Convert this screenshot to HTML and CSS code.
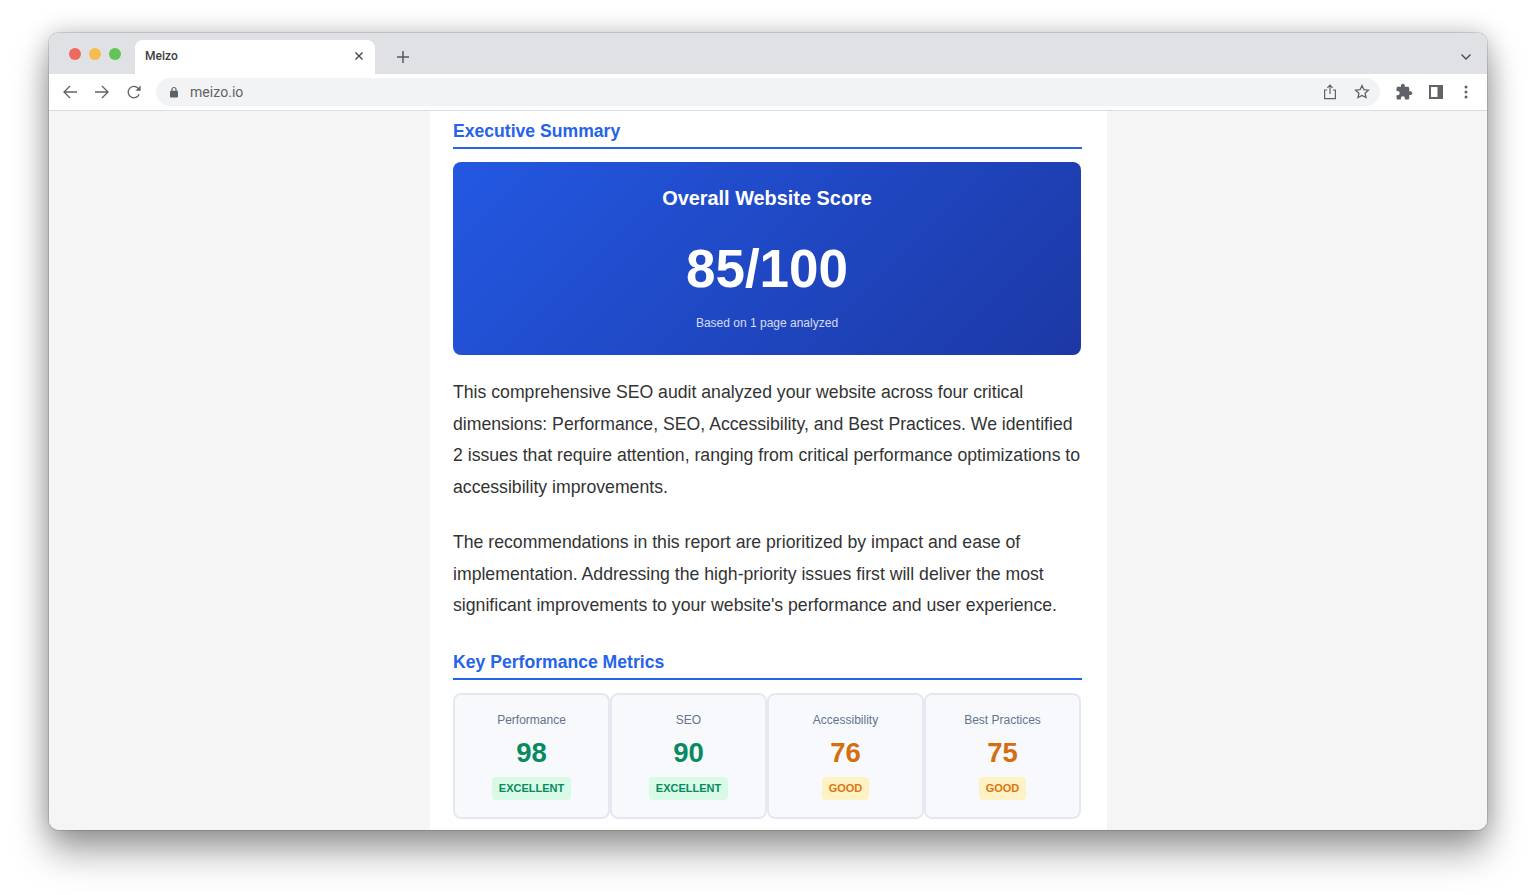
FILE: index.html
```html
<!DOCTYPE html>
<html lang="en">

<head>
    <meta charset="UTF-8">
    <meta name="viewport" content="width=device-width, initial-scale=1.0">
    <title>Meizo</title>
    <link rel="stylesheet" href="styles.css">
</head>

<body>

    <div class="browser-window">

        <!-- Tab strip -->
        <div class="tab-strip">
            <div class="traffic-lights">
                <span class="light light-red"></span>
                <span class="light light-yellow"></span>
                <span class="light light-green"></span>
            </div>
            <div class="tab">
                <span class="tab-title">Meizo</span>
                <svg class="tab-close" width="10" height="10" viewBox="0 0 10 10">
                    <path d="M1.500 1.500l7 7M8.500 1.500l-7 7" stroke="#45474a" stroke-width="1.4" fill="none"/>
                </svg>
            </div>
            <svg class="new-tab" width="14" height="14" viewBox="0 0 14 14">
                <path d="M7 1v12M1 7h12" stroke="#54575b" stroke-width="1.500" fill="none"/>
            </svg>
            <svg class="tab-list" width="12" height="8" viewBox="0 0 12 8">
                <path d="M1.500 1.500L6 6l4.500-4.500" stroke="#45474a" stroke-width="1.300" fill="none"/>
            </svg>
        </div>

        <!-- Address bar -->
        <div class="toolbar">
            <div class="nav-buttons">
                <svg width="16" height="16" viewBox="0 0 16 16">
                    <path d="M15 8H2M8 2L2 8l6 6" stroke="#5f6368" stroke-width="1.300" fill="none"/>
                </svg>
                <svg width="16" height="16" viewBox="0 0 16 16">
                    <path d="M1 8h13M8 2l6 6-6 6" stroke="#5f6368" stroke-width="1.300" fill="none"/>
                </svg>
                <svg width="16" height="16" viewBox="0 0 16 16">
                    <path d="M13.200 10.200A5.700 5.700 0 1 1 12 4.100L14 6" stroke="#5f6368" stroke-width="1.300" fill="none"/>
                    <path d="M14.600 1.600v5.200H9.400z" fill="#5f6368"/>
                </svg>
            </div>
            <div class="omnibox">
                <svg class="lock" width="10" height="12" viewBox="0 0 10 12">
                    <path d="M3 5V3.500a2 2 0 0 1 4 0V5" stroke="#5f6368" stroke-width="1.200" fill="none"/>
                    <rect x="1" y="4.800" width="8" height="6.700" rx="1" fill="#5f6368"/>
                </svg>
                <span class="url">meizo.io</span>
                <div class="omnibox-actions">
                    <svg width="14" height="16" viewBox="0 0 14 16">
                        <path d="M4.200 6H1.600v8.600h10.800V6H9.800M7 10V1.400M4.400 3.800L7 1.200l2.600 2.600" stroke="#5f6368" stroke-width="1.200" fill="none"/>
                    </svg>
                    <svg width="16" height="15" viewBox="0 0 16 15">
                        <path d="M8 1.600l1.900 4.100 4.500.5-3.300 3 .9 4.400L8 11.400l-4 2.200.9-4.400-3.300-3 4.500-.5z" stroke="#5f6368" stroke-width="1.300" fill="none"/>
                    </svg>
                </div>
            </div>
            <div class="toolbar-actions">
                <svg width="18" height="18" viewBox="0 0 24 24">
                    <path d="M20.500 11H19V7c0-1.100-.9-2-2-2h-4V3.500C13 2.120 11.880 1 10.500 1S8 2.120 8 3.500V5H4c-1.100 0-1.990.9-1.990 2v3.800H3.500c1.490 0 2.700 1.210 2.700 2.700s-1.210 2.700-2.700 2.700H2V20c0 1.100.9 2 2 2h3.800v-1.500c0-1.490 1.210-2.700 2.700-2.700 1.490 0 2.700 1.210 2.700 2.700V22H17c1.100 0 2-.9 2-2v-4h1.500c1.380 0 2.500-1.120 2.500-2.500S21.880 11 20.500 11z" fill="#5f6368"/>
                </svg>
                <svg width="14" height="14" viewBox="0 0 14 14">
                    <path d="M0 0h14v14H0zM2 2v10h6.500V2z" fill="#5f6368" fill-rule="evenodd"/>
                </svg>
                <svg class="menu-dots" width="4" height="14" viewBox="0 0 4 14">
                    <circle cx="2" cy="2" r="1.500" fill="#5f6368"/>
                    <circle cx="2" cy="7" r="1.500" fill="#5f6368"/>
                    <circle cx="2" cy="12" r="1.500" fill="#5f6368"/>
                </svg>
            </div>
        </div>

        <!-- Page content -->
        <div class="viewport">
            <div class="report">
                <h2 class="section-title">Executive Summary</h2>

                <div class="score-card">
                    <h3>Overall Website Score</h3>
                    <div class="score-value">85/100</div>
                    <p>Based on 1 page analyzed</p>
                </div>

                <p class="body-text">This comprehensive SEO audit analyzed your website across four critical dimensions: Performance, SEO, Accessibility, and Best Practices. We identified 2 issues that require attention, ranging from critical performance optimizations to accessibility improvements.</p>
                <p class="body-text">The recommendations in this report are prioritized by impact and ease of implementation. Addressing the high-priority issues first will deliver the most significant improvements to your website's performance and user experience.</p>

                <h2 class="section-title metrics-title">Key Performance Metrics</h2>

                <div class="metrics">
                    <div class="metric">
                        <div class="metric-label">Performance</div>
                        <div class="metric-value excellent">98</div>
                        <span class="badge badge-excellent">EXCELLENT</span>
                    </div>
                    <div class="metric">
                        <div class="metric-label">SEO</div>
                        <div class="metric-value excellent">90</div>
                        <span class="badge badge-excellent">EXCELLENT</span>
                    </div>
                    <div class="metric">
                        <div class="metric-label">Accessibility</div>
                        <div class="metric-value good">76</div>
                        <span class="badge badge-good">GOOD</span>
                    </div>
                    <div class="metric">
                        <div class="metric-label">Best Practices</div>
                        <div class="metric-value good">75</div>
                        <span class="badge badge-good">GOOD</span>
                    </div>
                </div>
            </div>
        </div>
    </div>

</body>

</html>
```

FILE: styles.css
```css
/* Basic reset */
* {
    box-sizing: border-box;
    margin: 0;
    padding: 0;
}

body {
    height: 100vh;
    padding: 33px 49px 65px;
    background: #fff;
    font-family: 'Liberation Sans', Arial, sans-serif;
    overflow: hidden;
}

/* Browser chrome */
.browser-window {
    display: flex;
    flex-direction: column;
    height: 797px;
    border-radius: 10px;
    overflow: hidden;
    box-shadow: 0 0 0 1px rgba(0, 0, 0, 0.12), 0 22px 36px rgba(0, 0, 0, 0.36), 0 0 26px rgba(0, 0, 0, 0.22);
}

.tab-strip {
    display: flex;
    align-items: flex-end;
    flex: 0 0 41px;
    background: #dfe1e5;
}

.traffic-lights {
    display: flex;
    gap: 8px;
    align-self: flex-start;
    margin: 15px 14px 0 20px;
}

.light {
    width: 12px;
    height: 12px;
    border-radius: 50%;
}

.light-red {
    background: #ee6a5f;
}

.light-yellow {
    background: #f5bd4f;
}

.light-green {
    background: #61c454;
}

.tab {
    display: flex;
    align-items: center;
    justify-content: space-between;
    width: 240px;
    height: 34px;
    padding: 0 11px 2px 10px;
    background: #fff;
    border-radius: 8px 8px 0 0;
}

.tab-title {
    font-family: 'Roboto', sans-serif;
    font-size: 12px;
    font-weight: 500;
    color: #3c4043;
}

.new-tab {
    align-self: center;
    margin: 6px 0 0 21px;
}

.tab-list {
    align-self: center;
    margin: 6px 15px 0 auto;
}

.toolbar {
    display: flex;
    align-items: center;
    flex: 0 0 37px;
    padding-bottom: 1px;
    background: #fff;
    border-bottom: 1px solid #dadce0;
}

.nav-buttons {
    display: flex;
    align-items: center;
    gap: 16px;
    margin-left: 13px;
}

.omnibox {
    display: flex;
    align-items: center;
    width: 1224px;
    height: 28px;
    margin-left: 14px;
    padding: 0 10px 0 13px;
    background: #f1f3f4;
    border-radius: 14px;
}

.url {
    margin-left: 11px;
    font-family: 'Roboto', sans-serif;
    font-size: 14px;
    letter-spacing: 0.05px;
    color: #5f6368;
}

.omnibox-actions {
    display: flex;
    align-items: center;
    gap: 17px;
    margin-left: auto;
}

.toolbar-actions {
    display: flex;
    align-items: center;
    gap: 16px;
    margin-left: 15px;
}

.menu-dots {
    margin-left: 5px;
}

/* Report page */
.viewport {
    flex: 1;
    display: flex;
    justify-content: center;
    overflow: hidden;
    background: #f5f5f5;
}

.report {
    width: 677px;
    margin-left: 1px;
    padding: 10px 25px 0 23px;
    background: #fff;
}

.section-title {
    padding-bottom: 5px;
    font-size: 17.6px;
    line-height: 21px;
    font-weight: 700;
    color: #2563eb;
    border-bottom: 2px solid #2563eb;
}

.score-card {
    height: 193px;
    margin: 13px 1px 0 0;
    padding-top: 25px;
    text-align: center;
    color: #fff;
    background: linear-gradient(135deg, #2358e2, #1c38a5);
    border-radius: 8px;
}

.score-card h3 {
    font-size: 19.9px;
    line-height: 23px;
    font-weight: 700;
}

.score-value {
    margin-top: 29px;
    font-size: 53px;
    line-height: 60px;
    font-weight: 700;
}

.score-card p {
    margin-top: 17px;
    font-size: 12px;
    line-height: 14px;
    opacity: 0.8;
}

.body-text {
    margin-top: 22px;
    font-size: 17.66px;
    line-height: 31.5px;
    color: #333;
}

.body-text + .body-text {
    margin-top: 24px;
}

.metrics-title {
    margin-top: 30px;
}

.metrics {
    display: grid;
    grid-template-columns: repeat(4, 1fr);
    height: 126px;
    margin: 13px 1px 0 0;
}

.metric {
    padding-top: 18px;
    text-align: center;
    background: #f7f9fd;
    border: 2px solid #e4e9f1;
    border-radius: 8px;
}

.metric-label {
    font-size: 12px;
    line-height: 14px;
    color: #64748b;
}

.metric-value {
    margin-top: 10px;
    font-size: 27.5px;
    line-height: 32px;
    font-weight: 700;
}

.excellent {
    color: #078a60;
}

.good {
    color: #d46e0f;
}

.badge {
    display: inline-block;
    margin-top: 8px;
    padding: 4px 7px;
    font-size: 11px;
    line-height: 15px;
    font-weight: 700;
    border-radius: 4px;
}

.badge-excellent {
    color: #078a60;
    background: #d9fae6;
}

.badge-good {
    color: #d9770f;
    background: #fef1c3;
}
```
